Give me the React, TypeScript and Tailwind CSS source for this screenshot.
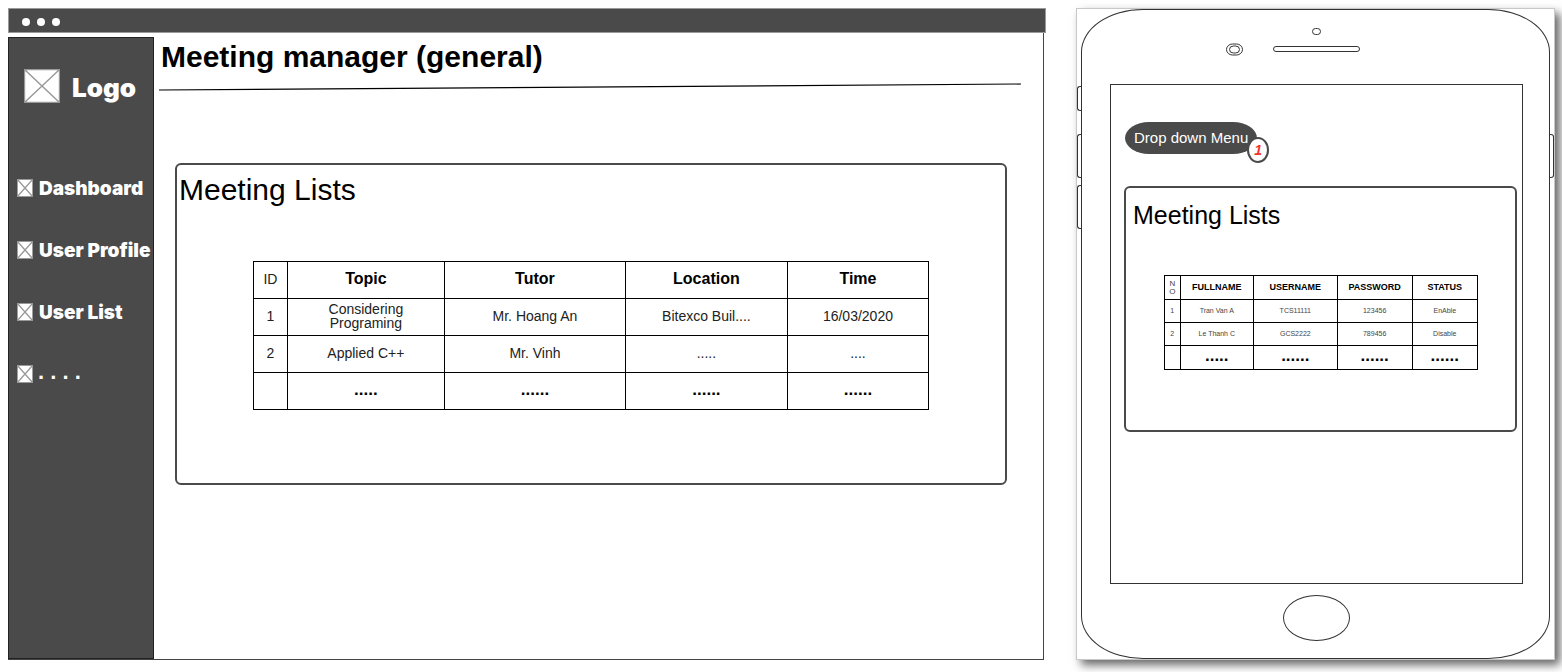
import type { ReactNode } from "react";

function CrossBox({ className }: { className: string }) {
  return (
    <svg
      viewBox="0 0 36 36"
      preserveAspectRatio="none"
      className={`shrink-0 ${className}`}
      aria-hidden="true"
    >
      <rect x="0" y="0" width="36" height="36" fill="#fff" />
      <path
        d="M0.5 0.5H35.5V35.5H0.5ZM0.5 0.5L35.5 35.5M35.5 0.5L0.5 35.5"
        fill="none"
        stroke="#999"
        strokeWidth="1.4"
        vectorEffect="non-scaling-stroke"
      />
    </svg>
  );
}

const NAV = ["Dashboard", "User Profile", "User List"];

function Sidebar() {
  return (
    <aside className="mt-1 w-[146px] shrink-0 border border-[#222] bg-[#4a4a4a] font-['Inter',sans-serif] font-black text-white">
      <a href="#home" className="mt-[31px] ml-[15px] flex items-center gap-3">
        <CrossBox className="h-[34px] w-9" />
        <span className="pt-1 text-[26px] leading-[30px]">Logo</span>
      </a>
      <nav className="mt-[54px] ml-2">
        <ul>
          {NAV.map((label) => (
            <li key={label} className="flex h-[62px] items-center">
              <a href="#nav" className="flex items-center gap-[6px]">
                <CrossBox className="h-[18px] w-4" />
                <span className="pt-[2px] text-[19px] leading-5 whitespace-nowrap">{label}</span>
              </a>
            </li>
          ))}
          <li className="flex h-[62px] items-center">
            <a href="#more" className="flex items-center gap-[5px]">
              <CrossBox className="h-[18px] w-4" />
              <span className="pb-1 font-['Liberation_Sans',Arial,sans-serif] text-[22px] leading-5 font-bold">
                . . . .
              </span>
            </a>
          </li>
        </ul>
      </nav>
    </aside>
  );
}

const MEETINGS: ReactNode[][] = [
  [
    "1",
    <>
      Considering
      <br />
      Programing
    </>,
    "Mr. Hoang An",
    "Bitexco Buil....",
    "16/03/2020",
  ],
  ["2", "Applied C++", "Mr. Vinh", ".....", "...."],
];

function MeetingTable() {
  return (
    <table className="w-full table-fixed border-collapse text-center text-sm leading-[14px] text-[#222]">
      <colgroup>
        <col className="w-[5%]" />
        <col className="w-[23.3%]" />
        <col className="w-[26.8%]" />
        <col className="w-[24%]" />
        <col className="w-[20.9%]" />
      </colgroup>
      <thead>
        <tr className="h-[37px]">
          <th className="border border-black pb-[2px] font-normal">ID</th>
          {["Topic", "Tutor", "Location", "Time"].map((h) => (
            <th key={h} className="border border-black pb-[2px] text-base leading-[14px] font-bold text-black">
              {h}
            </th>
          ))}
        </tr>
      </thead>
      <tbody>
        {MEETINGS.map((row, r) => (
          <tr key={r} className="h-[37px]">
            {row.map((cell, c) => (
              <td key={c} className="border border-black pb-[2px]">
                {cell}
              </td>
            ))}
          </tr>
        ))}
        <tr className="h-[37px] text-[17px] font-bold text-black">
          <td className="border border-black" />
          {[".....", "......", "......", "......"].map((dots, i) => (
            <td key={i} className="border border-black pb-[2px]">
              {dots}
            </td>
          ))}
        </tr>
      </tbody>
    </table>
  );
}

function DesktopWindow() {
  return (
    <section className="flex min-w-0 flex-col">
      <div className="flex h-[25px] items-center gap-[7px] border border-[#999] bg-[#4a4a4a] pt-[3px] pl-[13px]">
        <span className="size-2 rounded-full bg-white" />
        <span className="size-2 rounded-full bg-white" />
        <span className="size-2 rounded-full bg-white" />
      </div>
      <div className="mr-[2px] flex flex-1 border-r border-b border-[#444]">
        <Sidebar />
        <main className="min-w-0 flex-1">
          <h1 className="pt-[6px] pl-[7px] text-3xl leading-9 font-bold text-black">
            Meeting manager (general)
          </h1>
          <svg
            viewBox="0 0 862 8"
            preserveAspectRatio="none"
            className="mt-2 ml-[5px] h-2 w-[calc(100%-27px)]"
            aria-hidden="true"
          >
            <path d="M0 7L862 1" stroke="#000" strokeWidth="1.2" vectorEffect="non-scaling-stroke" />
          </svg>
          <section className="mt-[72px] mr-9 ml-[21px] h-[322px] rounded-md border-2 border-[#4a4a4a]">
            <h2 className="mt-[7px] ml-[2px] text-3xl leading-9 text-black">Meeting Lists</h2>
            <div className="mx-[76px] mt-[53px]">
              <MeetingTable />
            </div>
          </section>
        </main>
      </div>
    </section>
  );
}

const USERS = [
  ["1", "Tran Van A", "TCS11111", "123456", "EnAble"],
  ["2", "Le Thanh C", "GCS2222", "789456", "Disable"],
];

function UserTable() {
  return (
    <table className="w-full table-fixed border-collapse text-center text-[7px] leading-[8px] text-[#444]">
      <colgroup>
        <col className="w-[5%]" />
        <col className="w-[23.4%]" />
        <col className="w-[26.8%]" />
        <col className="w-[23.9%]" />
        <col className="w-[20.9%]" />
      </colgroup>
      <thead>
        <tr className="h-6">
          <th className="border border-black text-[8px] font-normal">
            N
            <br />O
          </th>
          {["FULLNAME", "USERNAME", "PASSWORD", "STATUS"].map((h) => (
            <th key={h} className="border border-black pb-px text-[9px] leading-[8px] font-bold text-black">
              {h}
            </th>
          ))}
        </tr>
      </thead>
      <tbody>
        {USERS.map((row) => (
          <tr key={row[0]} className="h-[23px]">
            {row.map((cell, c) => (
              <td key={c} className="border border-black">
                {cell}
              </td>
            ))}
          </tr>
        ))}
        <tr className="h-6 text-[17px] leading-[14px] font-bold text-black">
          <td className="border border-black" />
          {[".....", "......", "......", "......"].map((dots, i) => (
            <td key={i} className="border border-black pb-[4px]">
              {dots}
            </td>
          ))}
        </tr>
      </tbody>
    </table>
  );
}

function Phone() {
  return (
    <section className="relative flex min-w-0 flex-col border border-[#c8c8c8] bg-white px-1 shadow-[5px_5px_9px_rgba(0,0,0,0.6)]">
      <span className="absolute top-[77px] left-0 h-[25px] w-[5px] rounded-l-[3px] border border-r-0 border-[#333]" />
      <span className="absolute top-[125px] left-0 h-11 w-[5px] rounded-l-[3px] border border-r-0 border-[#333]" />
      <span className="absolute top-[176px] left-0 h-11 w-[5px] rounded-l-[3px] border border-r-0 border-[#333]" />
      <span className="absolute top-[125px] right-0 h-11 w-[5px] rounded-r-[3px] border border-l-0 border-[#333]" />
      <div className="flex flex-1 flex-col rounded-[62px/43px] border border-[#333] pr-[26px] pl-7">
        <div className="flex h-[74px] justify-center">
          <svg width="134" height="30" viewBox="0 0 134 30" fill="none" stroke="#333" className="mt-[17px] mr-12" aria-hidden="true">
            <rect x="86.500" y="1.500" width="8" height="6" rx="3" />
            <rect x="0.500" y="17" width="16" height="11" rx="6" ry="5.500" />
            <rect x="3.500" y="19" width="10" height="7" rx="4" ry="3.500" />
            <rect x="47.500" y="19.500" width="86" height="5" rx="2.500" />
          </svg>
        </div>
        <div className="flex-1 border border-[#333] pr-[5px] pl-[13px]">
          <div className="relative mt-[37px] ml-px w-fit">
            <button
              type="button"
              className="block h-8 rounded-[24px/16px] bg-[#4a4a4a] px-[9px] text-[15px] leading-8 whitespace-nowrap text-white"
            >
              Drop down Menu
            </button>
            <span className="absolute -right-3 -bottom-[9px] flex h-[26px] w-[22px] items-center justify-center rounded-[50%] border-2 border-[#4a4a4a] bg-white text-sm leading-none font-bold text-[#f3332c] italic">
              1
            </span>
          </div>
          <section className="mt-8 h-[246px] rounded-md border-2 border-[#4a4a4a]">
            <h2 className="mt-[11px] ml-[7px] text-[25px] leading-8 text-black">Meeting Lists</h2>
            <div className="mr-[37px] ml-[38px] mt-11">
              <UserTable />
            </div>
          </section>
        </div>
        <div className="flex h-[74px] justify-center pt-[11px]">
          <button
            type="button"
            aria-label="Home"
            className="h-[46px] w-[67px] rounded-[50%] border border-[#333]"
          />
        </div>
      </div>
    </section>
  );
}

export default function App() {
  return (
    <div className="grid min-h-screen grid-cols-[1038fr_479fr] gap-[30px] overflow-x-hidden bg-white pt-2 pr-[7px] pb-3 pl-2 font-['Liberation_Sans',Arial,sans-serif]">
      <DesktopWindow />
      <Phone />
    </div>
  );
}
